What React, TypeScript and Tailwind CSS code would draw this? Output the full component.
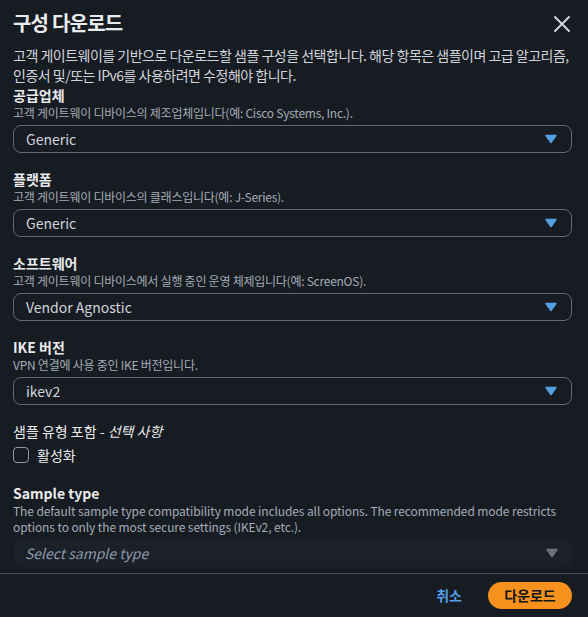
const Caret = ({ color }: { color: string }) => (
  <svg width="12" height="10" viewBox="0 0 12 10" className="shrink-0">
    <path d="M1 1.5h10L6 8.5z" fill={color} stroke={color} strokeWidth="1.5" strokeLinejoin="round" />
  </svg>
);

const Field = ({ label, hint, value }: { label: string; hint: string; value: string }) => (
  <div className="flex flex-col">
    <div className="text-[14px] leading-[20px] font-bold text-[#e9ebed]">{label}</div>
    <div className="text-[12px] leading-[16px] text-[#a4acb6] tracking-[-0.25px]">{hint}</div>
    <div className="mt-[4px] h-[28px] rounded-[8px] border border-[#5f6b7a] flex items-center justify-between pl-[12px] pr-[14px]">
      <span className="text-[14px] text-[#d1d5db]">{value}</span>
      <Caret color="#539fe5" />
    </div>
  </div>
);

export default function App() {
  return (
    <div
      className="w-[588px] h-[617px] bg-[#171b22] flex flex-col overflow-hidden"
      style={{ fontFamily: '"Noto Sans CJK KR", "Noto Sans", sans-serif' }}
    >
      <div className="flex items-center justify-between pl-[13px] pr-[16px] pt-[6px] h-[40px]">
        <h1 className="text-[20px] leading-[28px] font-bold text-[#e9ebed] tracking-[-0.8px]">구성 다운로드</h1>
        <svg width="20" height="20" viewBox="0 0 20 20" className="mt-[2px]">
          <path d="M3 3l14 14M17 3L3 17" stroke="#d1d5db" strokeWidth="2" strokeLinecap="round" />
        </svg>
      </div>

      <div className="flex-1 flex flex-col pl-[13px] pr-[16px] pt-[5px]">
        <p className="text-[14px] leading-[20px] text-[#d1d5db] whitespace-nowrap tracking-[-0.5px]">
          고객 게이트웨이를 기반으로 다운로드할 샘플 구성을 선택합니다. 해당 항목은 샘플이며 고급 알고리즘,
          <br />
          인증서 및/또는 IPv6를 사용하려면 수정해야 합니다.
        </p>

        <div className="flex flex-col gap-[16px]">
          <Field label="공급업체" hint="고객 게이트웨이 디바이스의 제조업체입니다(예: Cisco Systems, Inc.)." value="Generic" />
          <Field label="플랫폼" hint="고객 게이트웨이 디바이스의 클래스입니다(예: J-Series)." value="Generic" />
          <Field label="소프트웨어" hint="고객 게이트웨이 디바이스에서 실행 중인 운영 체제입니다(예: ScreenOS)." value="Vendor Agnostic" />
          <Field label="IKE 버전" hint="VPN 연결에 사용 중인 IKE 버전입니다." value="ikev2" />

          <div className="flex flex-col gap-[4px]">
            <div className="text-[14px] leading-[20px] text-[#e9ebed]">
              샘플 유형 포함 - <i>선택 사항</i>
            </div>
            <label className="flex items-center gap-[8px] h-[20px]">
              <span className="w-[16px] h-[16px] rounded-[4px] border border-[#8d99a8]" />
              <span className="text-[14px] text-[#e9ebed]">활성화</span>
            </label>
          </div>
        </div>

        <div className="flex flex-col mt-[18px]">
          <div className="text-[14px] leading-[20px] font-bold text-[#e9ebed]">Sample type</div>
          <div className="text-[12px] leading-[16px] text-[#a4acb6] whitespace-nowrap tracking-[-0.1px]">
            The default sample type compatibility mode includes all options. The recommended mode restricts
            <br />
            options to only the most secure settings (IKEv2, etc.).
          </div>
          <div className="mt-[4px] h-[28px] rounded-[8px] bg-[#1c2029] flex items-center justify-between pl-[12px] pr-[14px]">
            <span className="text-[14px] italic text-[#8d99a8]">Select sample type</span>
            <Caret color="#6b7280" />
          </div>
        </div>
      </div>

      <div className="h-px bg-[#414d5c]" />

      <div className="flex items-center justify-end gap-[26px] pr-[16px] h-[43px]">
        <span className="text-[14px] font-bold text-[#539fe5]">취소</span>
        <button className="h-[27px] w-[84px] rounded-full bg-[#f5911c] text-[14px] font-bold text-[#0f141a]">
          다운로드
        </button>
      </div>
    </div>
  );
}
